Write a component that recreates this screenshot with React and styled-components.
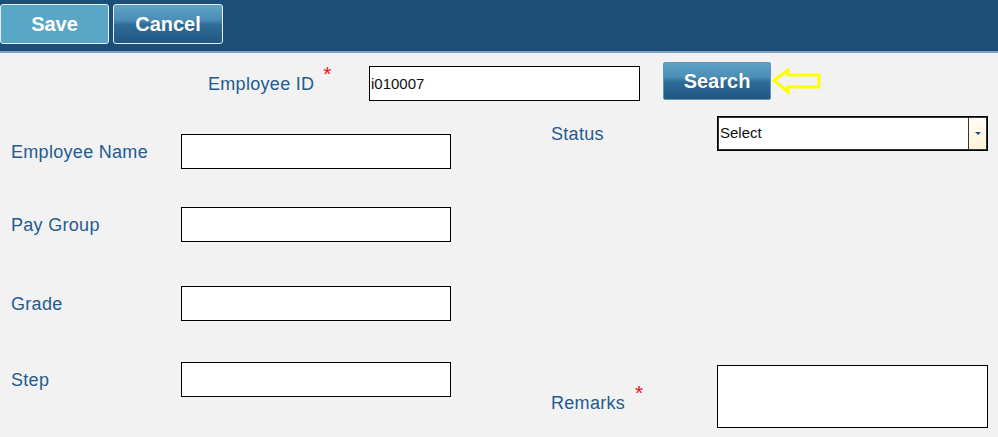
import React from "react";
import styled, { createGlobalStyle, css } from "styled-components";

const GlobalStyle = createGlobalStyle`
    body {
        margin: 0;
        background: #f2f2f2;
        font-family: "Liberation Sans", Arial, sans-serif;
    }
`;

const PageStyled = styled.div`
    width: 998px;
    height: 437px;
    overflow: hidden;
    background: #f2f2f2;
`;

const ToolbarStyled = styled.div`
    height: 53px;
    box-sizing: border-box;
    background: #1b4f77;
    border-bottom: 2px solid #7f9fc4;
    display: flex;
    align-items: flex-start;
    gap: 4px;
    padding-top: 4px;
`;

const glossy = css`
    background: linear-gradient(
        to bottom,
        #5ea2c4 0%,
        #4a8db7 40%,
        #2e6c98 52%,
        #1f5882 100%
    );
`;

const ToolbarButton = styled.button`
    width: ${({ $width }) => $width}px;
    height: 40px;
    border: 1px solid #e6eef4;
    border-radius: 3px;
    color: #fff;
    font-family: "Liberation Sans", Arial, sans-serif;
    font-size: 20px;
    font-weight: bold;
    padding: 0;
    ${({ $flat }) =>
        $flat
            ? css`
                  background: #5aa6c7;
              `
            : glossy}
`;

const IdRowStyled = styled.div`
    display: flex;
    align-items: flex-start;
    padding: 9px 0 0 208px;
`;

const Label = styled.div`
    width: ${({ $width }) => $width}px;
    flex-shrink: 0;
    color: #245b8f;
    font-size: 18px;
    line-height: 20px;
    letter-spacing: 0.3px;
    margin-top: ${({ $top }) => $top || 0}px;
`;

const Required = styled.span`
    color: #ee1111;
    font-size: 21px;
    position: relative;
    top: -9px;
    margin-left: ${({ $gap }) => $gap}px;
`;

const TextBox = styled.input`
    box-sizing: border-box;
    width: ${({ $width }) => $width || 270}px;
    height: 35px;
    border: 1px solid #000;
    background: #fff;
    margin: ${({ $top }) => $top || 0}px 0 0 0;
    padding: 0 1px;
    font-family: "Liberation Sans", Arial, sans-serif;
    font-size: 15px;
    color: #111;
    outline: none;
`;

const SearchButton = styled.button`
    ${glossy};
    width: 108px;
    height: 38px;
    margin-left: 23px;
    border: 1px solid #5f93b8;
    border-radius: 2px;
    color: #fff;
    font-family: "Liberation Sans", Arial, sans-serif;
    font-size: 20px;
    font-weight: bold;
    text-shadow: 0 0 1px rgba(0, 0, 0, 0.3);
    padding: 0;
`;

const ArrowStyled = styled.svg`
    margin-top: 6px;
    flex-shrink: 0;
`;

const BodyStyled = styled.div`
    display: flex;
    padding-left: 11px;
`;

const ColumnStyled = styled.div`
    width: ${({ $width }) => $width}px;
    padding-top: ${({ $top }) => $top}px;
    display: flex;
    flex-direction: column;
`;

const FieldRow = styled.div`
    display: flex;
    align-items: center;
    margin-top: ${({ $top }) => $top || 0}px;
`;

const SelectBox = styled.div`
    box-sizing: border-box;
    width: 271px;
    height: 35px;
    border: 1px solid #000;
    box-shadow: inset 0 0 0 1px #333;
    background: #fff;
    display: flex;
    font-size: 15px;
    color: #111;
`;

const SelectValue = styled.div`
    flex: 1;
    padding: 7px 0 0 2px;
`;

const SelectToggle = styled.div`
    width: 17px;
    margin: 1px 1px 1px 0;
    border-left: 1px solid #333;
    background: linear-gradient(to bottom, #fffdf6, #fdf3d6);
    display: flex;
    align-items: center;
    justify-content: center;

    &::after {
        content: "";
        border-left: 3px solid transparent;
        border-right: 3px solid transparent;
        border-top: 3px solid #1d4f86;
    }
`;

const TextArea = styled.textarea`
    box-sizing: border-box;
    width: 271px;
    height: 63px;
    border: 1px solid #000;
    background: #fff;
    resize: none;
    outline: none;
    margin: 0;
`;

const leftFields = [
    { label: "Employee Name", top: 0 },
    { label: "Pay Group", top: 38 },
    { label: "Grade", top: 44 },
    { label: "Step", top: 41 },
];

const App = () => {
    return (
        <PageStyled>
            <GlobalStyle />
            <ToolbarStyled>
                <ToolbarButton $flat $width={109}>
                    Save
                </ToolbarButton>
                <ToolbarButton $width={110}>Cancel</ToolbarButton>
            </ToolbarStyled>

            <IdRowStyled>
                <Label $width={161} $top={11}>
                    Employee ID
                    <Required $gap={9}>*</Required>
                </Label>
                <TextBox $width={271} $top={4} defaultValue="i010007" />
                <SearchButton>Search</SearchButton>
                <ArrowStyled width="52" height="27" viewBox="0 0 52 27">
                    <polygon
                        points="3,12.5 17,2 17,7 48,7 48,19 17,19 17,24"
                        fill="none"
                        stroke="#ffff00"
                        strokeWidth="3"
                        strokeLinejoin="miter"
                    />
                </ArrowStyled>
            </IdRowStyled>

            <BodyStyled>
                <ColumnStyled $width={540} $top={33}>
                    {leftFields.map(({ label, top }) => (
                        <FieldRow key={label} $top={top}>
                            <Label $width={170}>{label}</Label>
                            <TextBox />
                        </FieldRow>
                    ))}
                </ColumnStyled>

                <ColumnStyled $width={440} $top={15}>
                    <FieldRow>
                        <Label $width={166}>Status</Label>
                        <SelectBox>
                            <SelectValue>Select</SelectValue>
                            <SelectToggle />
                        </SelectBox>
                    </FieldRow>
                    <FieldRow $top={214}>
                        <Label $width={166} $top={12}>
                            Remarks
                            <Required $gap={10}>*</Required>
                        </Label>
                        <TextArea />
                    </FieldRow>
                </ColumnStyled>
            </BodyStyled>
        </PageStyled>
    );
};

export default App;
